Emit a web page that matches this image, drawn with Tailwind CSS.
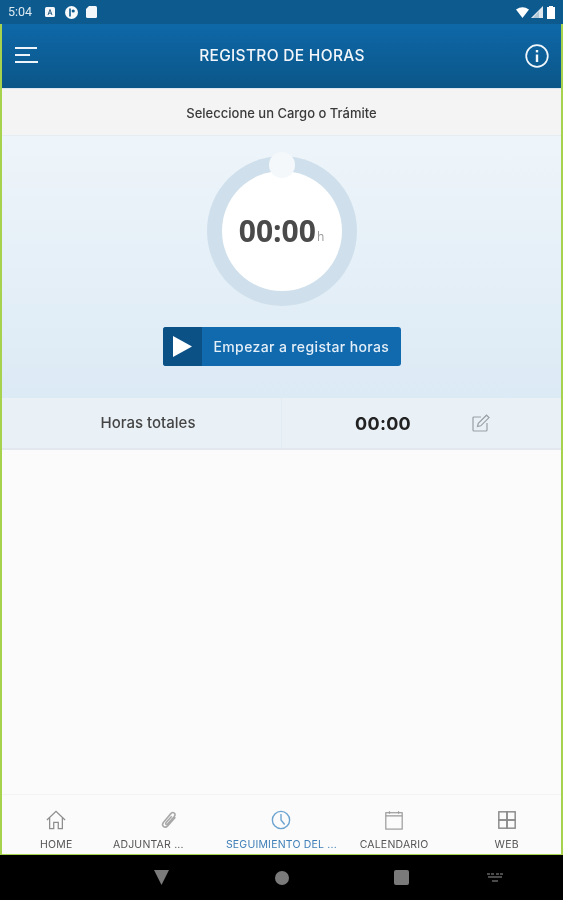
<!DOCTYPE html>
<html lang="en">
<head>
  <meta charset="UTF-8" />
  <title>Registro de horas</title>
  <script src="https://cdn.jsdelivr.net/npm/@tailwindcss/browser@4"></script>
</head>
<body class="bg-black font-['Inter','Liberation_Sans',sans-serif]">
<div class="w-[563px] h-[900px] flex flex-col overflow-hidden blur-[0.4px]">

  <!-- Status bar -->
  <div class="h-[24px] shrink-0 bg-[#0c5a8e] flex items-center justify-between pl-[8px] pr-[8px] text-white">
    <div class="flex items-center">
      <span class="text-[12.5px] font-['Roboto',sans-serif] w-[37px] text-[#dce8f0]">5:04</span>
      <svg class="w-[10px] h-[10px]" viewBox="0 0 10 10"><rect width="10" height="10" rx="1.5" fill="#f4f7f9"/><path d="M3 8 L5 2.5 L7 8 M3.8 6.2 H6.2" stroke="#2c5f86" stroke-width="1" fill="none"/></svg>
      <svg class="w-[13px] h-[13px] ml-[10px]" viewBox="0 0 13 13"><circle cx="6.5" cy="6.5" r="6.5" fill="#f7f9fa"/><path d="M5 2.5 V10.5" stroke="#0c5a8e" stroke-width="1.6"/><circle cx="8.2" cy="5" r="1.6" fill="#0c5a8e"/></svg>
      <svg class="w-[11px] h-[12px] ml-[8px]" viewBox="0 0 11 12"><path d="M3 0 H9.5 Q11 0 11 1.5 V10.5 Q11 12 9.5 12 H1.5 Q0 12 0 10.5 V3 Z" fill="#f4f7f9"/></svg>
    </div>
    <div class="flex items-center">
      <svg class="w-[13px] h-[11px]" viewBox="0 0 13 11"><path d="M0 2.5 Q6.5 -2 13 2.5 L6.5 11 Z" fill="#fff"/></svg>
      <svg class="w-[12px] h-[12px] ml-[2px]" viewBox="0 0 12 12"><path d="M12 0 V12 H0 Z" fill="#dfe8ee"/><path d="M8 5 V12 H2 Z" fill="#8fb0c6" opacity=".6"/></svg>
      <svg class="w-[8px] h-[13px] ml-[4px]" viewBox="0 0 8 13"><path d="M2 0 H6 V1 H8 V13 H0 V1 H2 Z" fill="#fff"/></svg>
    </div>
  </div>

  <!-- App frame with green edge -->
  <div class="h-[832px] shrink-0 border-x-2 border-b-2 border-[#a6d24e] bg-[#fbfbfb] flex flex-col">

    <!-- Header -->
    <header class="h-[64px] shrink-0 bg-gradient-to-b from-[#0e68a8] to-[#0b5688] flex items-center justify-between pl-[13px] pr-[12px]">
      <svg class="w-[24px] h-[16px] -mt-[2px]" viewBox="0 0 24 16" fill="none" stroke="#eef5fa" stroke-width="2"><path d="M0 1 H22 M0 8 H15 M0 15 H23"/></svg>
      <h1 class="text-[#f2f6fa] text-[15.5px] font-medium tracking-[0.3px] -mt-px">REGISTRO DE HORAS</h1>
      <svg class="w-[24px] h-[24px]" viewBox="0 0 24 24" fill="none" stroke="#f2f7fb"><circle cx="12" cy="12" r="10.8" stroke-width="1.7"/><path d="M12 10.5 V18" stroke-width="2.4"/><path d="M12 6 V8.4" stroke-width="2.4"/></svg>
    </header>

    <!-- Selector -->
    <div class="h-[47px] shrink-0 bg-[#f4f4f4] border-t border-[#dbe6ee] flex items-center justify-center pt-[3px]">
      <span class="text-[13px] font-medium text-[#3a3a3a]">Seleccione un Cargo o Trámite</span>
    </div>

    <!-- Timer -->
    <section class="h-[263px] shrink-0 bg-gradient-to-b from-[#eef5fa] to-[#dceaf5] border-t border-[#e6edf2] flex flex-col items-center pt-[20px]">
      <div class="relative w-[150px] h-[150px] rounded-full bg-[#cfe0ec] flex items-center justify-center shrink-0">
        <div class="absolute top-[-4px] left-[62px] w-[26px] h-[26px] rounded-full bg-[#f4f8fb]"></div>
        <div class="w-[120px] h-[120px] rounded-full bg-white flex items-center justify-center">
          <span class="font-['Open_Sans',sans-serif] text-[30px] font-bold text-[#4a4a4a] leading-none">00:00</span><span class="font-['Open_Sans',sans-serif] text-[12px] text-[#999] mt-[12px] ml-[1px] leading-none">h</span>
        </div>
      </div>
      <button class="mt-[21px] w-[238px] h-[39px] rounded-[3px] bg-[#1169ae] flex items-center overflow-hidden">
        <span class="w-[39px] h-full bg-[#0c5186] flex items-center justify-center">
          <svg class="w-[20px] h-[21px]" viewBox="0 0 20 21"><path d="M1 0 L20 10.5 L1 21 Z" fill="#fff"/></svg>
        </span>
        <span class="ml-[12px] text-[14px] tracking-[0.37px] font-medium text-[#e4eff7]">Empezar a registar horas</span>
      </button>
    </section>

    <!-- Totals -->
    <div class="h-[52px] shrink-0 bg-[#e9f1f7] border-b-2 border-[#e2e8ed] flex">
      <div class="w-[280px] flex items-center justify-center border-r border-[#e2ebf2] pl-[13px]">
        <span class="text-[15px] font-medium text-[#444]">Horas totales</span>
      </div>
      <div class="flex-1 flex items-center">
        <span class="ml-[73px] text-[18px] font-bold text-[#222] tracking-[0.3px]">00:00</span>
        <svg class="w-[18px] h-[18px] ml-[61px]" viewBox="0 0 18 18" fill="none" stroke="#9aa0a5" stroke-width="1.2"><path d="M9 3 H2 Q1 3 1 4 V16 Q1 17 2 17 H14 Q15 17 15 16 V9"/><path d="M5.5 12.5 L6.3 9.3 L14.5 1.2 L17 3.6 L8.8 11.8 Z"/></svg>
      </div>
    </div>

    <div class="flex-1"></div>

    <!-- Bottom navigation -->
    <nav class="h-[60px] shrink-0 border-t border-[#f1f3f4]">
      <div class="-mx-[2px] grid grid-cols-5 text-[10.5px] tracking-[0.2px] text-[#555] leading-none">
        <a class="flex flex-col items-center pt-[15px]">
          <svg class="w-[20px] h-[20px]" viewBox="0 0 22 22" fill="none" stroke="#8e8e8e" stroke-width="1.4"><path d="M1 11 L11 1.5 L21 11"/><path d="M4 8.5 V20.5 H8.5 V13.5 H13.5 V20.5 H18 V8.5"/></svg>
          <span class="mt-[10px]">HOME</span>
        </a>
        <a class="flex flex-col items-center pt-[15px]">
          <svg class="w-[20px] h-[20px]" viewBox="0 0 22 22" fill="none" stroke="#a8a8a8" stroke-width="1.7"><path d="M18 8 L9.5 17.5 Q7 20 4.8 18 Q2.8 16 5 13.4 L13 4 Q15 2 16.8 3.4 Q18.6 5 16.8 7.2 L9.6 15.2 Q8.4 16.4 7.6 15.6 Q6.8 14.8 8 13.4 L14 6.8"/></svg>
          <span class="mt-[10px] mr-[41px]">ADJUNTAR ...</span>
        </a>
        <a class="flex flex-col items-center pt-[15px] text-[#3f7fb8]">
          <svg class="w-[20px] h-[20px]" viewBox="0 0 22 22" fill="none" stroke="#6aa3d0" stroke-width="1.5"><circle cx="11" cy="11" r="9.5"/><path d="M11 4.5 V11 L15 16"/></svg>
          <span class="mt-[10px]">SEGUIMIENTO DEL ...</span>
        </a>
        <a class="flex flex-col items-center pt-[15px]">
          <svg class="w-[20px] h-[20px]" viewBox="0 0 22 22" fill="none" stroke="#999" stroke-width="1.3"><rect x="2" y="3" width="18" height="18"/><path d="M2 6.5 H20 M6 1.5 V4 M16 1.5 V4"/></svg>
          <span class="mt-[10px]">CALENDARIO</span>
        </a>
        <a class="flex flex-col items-center pt-[15px]">
          <svg class="w-[20px] h-[20px]" viewBox="0 0 22 22" fill="none" stroke="#8a8a8a" stroke-width="1.6"><rect x="2" y="2" width="9" height="9"/><rect x="11" y="2" width="9" height="9"/><rect x="2" y="11" width="9" height="9"/><rect x="11" y="11" width="9" height="9"/></svg>
          <span class="mt-[10px]">WEB</span>
        </a>
      </div>
    </nav>
  </div>

  <!-- Android nav bar -->
  <div class="flex-1 bg-black flex items-center pl-[154px] -mt-px">
    <svg class="w-[15px] h-[15px]" viewBox="0 0 15 15"><path d="M0 0 H15 L7.5 15 Z" fill="#7a7a7a"/></svg>
    <div class="w-[14px] h-[14px] ml-[106px] rounded-full bg-[#7a7a7a]"></div>
    <div class="w-[15px] h-[15px] ml-[105px] rounded-[2px] bg-[#7a7a7a]"></div>
    <svg class="w-[16px] h-[9px] ml-[78px]" viewBox="0 0 16 9" fill="#4a4a4a"><path d="M0 0 H3 V2 H0 Z M4 0 H7 V2 H4 Z M9 0 H12 V2 H9 Z M13 0 H16 V2 H13 Z M1 3 H15 V5 H1 Z M5 7 H11 V9 H5 Z"/></svg>
  </div>
</div>
</body>
</html>
